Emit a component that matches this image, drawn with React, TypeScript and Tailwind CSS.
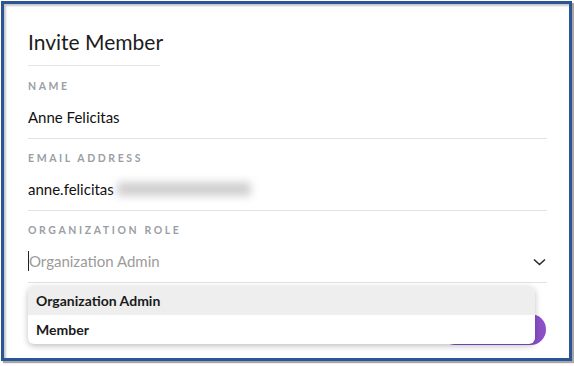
const font = { fontFamily: "Lato, 'Noto Sans', sans-serif" };

function Field({
  label,
  first,
  children,
}: {
  label: string;
  first?: boolean;
  children: React.ReactNode;
}) {
  return (
    <div className={`${first ? "pt-[15px]" : "pt-[14px]"} pb-[11px] border-b border-[#e2e2e2]`}>
      <div className="h-[10px] text-[10.5px] leading-[10px] font-bold tracking-[2.6px] text-[#9a9ea6]">
        {label}
      </div>
      <div className="mt-[16px] h-[20px] flex items-center">{children}</div>
    </div>
  );
}

export default function App() {
  return (
    <div className="w-[574px] h-[366px] bg-white" style={font}>
      <div className="relative ml-px mt-px w-[571px] h-[360px] border-[3px] border-[#2c5598] shadow-[inset_2px_2px_2px_rgba(0,0,0,0.22),2px_2px_1px_rgba(0,0,0,0.35)] pl-[24px] pr-[22px] pt-[24px]">
        <h1 className="whitespace-nowrap text-[21px] leading-[28px] font-normal text-[#1c1c1c]">
          Invite Member
        </h1>
        <div className="mt-[9px] h-px w-[132px] bg-[#e6e6e6]" />

        <Field label="NAME" first>
          <span className="text-[15px] leading-[20px] text-[#111]">Anne Felicitas</span>
        </Field>

        <Field label="EMAIL ADDRESS">
          <span className="text-[15px] leading-[20px] text-[#111]">anne.felicitas</span>
          <span className="ml-[3px] h-[14px] w-[134px] rounded bg-[#cfcfcf] blur-[4px]" />
        </Field>

        <Field label="ORGANIZATION ROLE">
          <div className="flex flex-1 items-center">
            <span className="h-[20px] w-px bg-[#222]" />
            <span className="text-[15px] leading-[20px] text-[#9b9b9b]">Organization Admin</span>
            <svg className="ml-auto mr-[1px] mt-[2px]" width="13" height="8" viewBox="0 0 13 8" fill="none">
              <path d="M1 1.5l5.5 5 5.5-5" stroke="#2a2a2a" strokeWidth="1.6" />
            </svg>
          </div>
        </Field>

        <div className="absolute left-[436px] top-[310px] h-[31px] w-[106px] rounded-full bg-[#8d4fc8]" />

        <div className="absolute left-[24px] top-[282px] w-[507px] overflow-hidden rounded-[6px] bg-white shadow-[0_2px_6px_rgba(0,0,0,0.25)]">
          <div className="h-[29px] bg-[#eeeeee] px-[8px] flex items-center text-[14px] font-bold text-[#1a1a1a]">
            Organization Admin
          </div>
          <div className="h-[29px] px-[8px] flex items-center text-[14px] font-bold text-[#1a1a1a]">
            Member
          </div>
        </div>
      </div>
    </div>
  );
}
